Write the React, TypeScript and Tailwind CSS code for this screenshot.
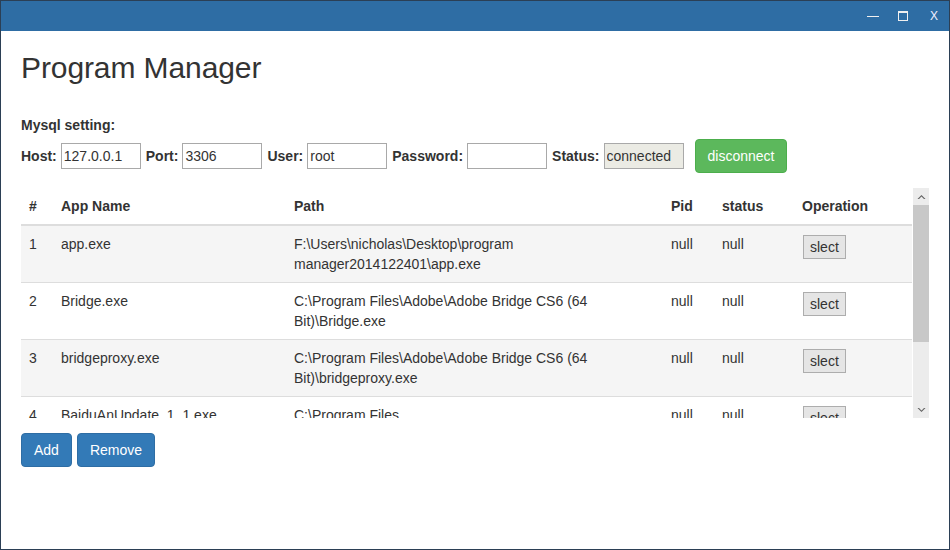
const rows = [
  { id: 1, name: "app.exe", path: "F:\\Users\\nicholas\\Desktop\\program manager2014122401\\app.exe" },
  { id: 2, name: "Bridge.exe", path: "C:\\Program Files\\Adobe\\Adobe Bridge CS6 (64 Bit)\\Bridge.exe" },
  { id: 3, name: "bridgeproxy.exe", path: "C:\\Program Files\\Adobe\\Adobe Bridge CS6 (64 Bit)\\bridgeproxy.exe" },
  { id: 4, name: "BaiduAnUpdate_1_1.exe", path: "C:\\Program Files (x86)\\Baidu\\BaiduAn\\BaiduAnUpdate_1_1.exe" },
  { id: 5, name: "notepad.exe", path: "C:\\Windows\\System32\\notepad.exe" },
];

const font = { fontFamily: "'Liberation Sans', Arial, sans-serif" };

function Field({ label, value, first, disabled }: { label: string; value: string; first?: boolean; disabled?: boolean }) {
  return (
    <>
      <span className={`font-bold mr-1 ${first ? "" : "ml-[5px]"}`}>{label}</span>
      <input
        readOnly
        value={value}
        className={`w-[80px] h-[26px] border border-[#a9a9a9] px-[2px] text-[14px] text-[#333] outline-none ${
          disabled ? "bg-[#ebebe4]" : "bg-white"
        }`}
        style={font}
      />
    </>
  );
}

export default function App() {
  return (
    <div className="w-[950px] h-[550px] border border-[#2b3f55] bg-white text-[#333] text-[14px] leading-[20px] flex flex-col" style={font}>
      <div className="h-[30px] bg-[#2e6da4] flex items-center justify-end shrink-0">
        <svg width="13" height="2" className="mr-[18px] mt-[1px]">
          <rect x="0" y="0" width="12" height="1" fill="#f0f0f0" />
        </svg>
        <svg width="10" height="10" className="mr-[22px]">
          <rect x="0.5" y="0.5" width="9" height="9" fill="none" stroke="#f0f0f0" />
          <rect x="0" y="0" width="10" height="2" fill="#f0f0f0" />
        </svg>
        <span className="text-[12px] leading-none text-[#eef] mr-[11px]">X</span>
      </div>

      <div className="px-[20px] pt-[20px] flex flex-col">
        <h1 className="text-[30px] leading-[33px] font-normal tracking-[-0.1px]">Program Manager</h1>

        <div className="font-bold mt-[31px]">Mysql setting:</div>

        <div className="flex items-center h-[34px] mt-[4px]">
          <Field label="Host:" value="127.0.0.1" first />
          <Field label="Port:" value="3306" />
          <Field label="User:" value="root" />
          <Field label="Password:" value="" />
          <Field label="Status:" value="connected" disabled />
          <button className="ml-[11px] h-[34px] px-[12px] bg-[#5cb85c] border border-[#4cae4c] rounded-[4px] text-white text-[14px]" style={font}>
            disconnect
          </button>
        </div>

        <div className="mt-[15px] flex h-[230px]">
          <div className="flex-1 overflow-hidden">
            <table className="w-[891px] table-fixed border-collapse">
              <colgroup>
                <col className="w-[32px]" />
                <col className="w-[233px]" />
                <col className="w-[377px]" />
                <col className="w-[51px]" />
                <col className="w-[80px]" />
                <col className="w-[118px]" />
              </colgroup>
              <thead>
                <tr>
                  {["#", "App Name", "Path", "Pid", "status", "Operation"].map((h) => (
                    <th key={h} className="text-left font-bold p-[8px] border-b-2 border-[#ddd]">
                      {h}
                    </th>
                  ))}
                </tr>
              </thead>
              <tbody>
                {rows.map((r, i) => (
                  <tr key={r.id} className={i % 2 === 0 ? "bg-[#f5f5f5]" : "bg-white"}>
                    <td className="p-[8px] align-top border-t border-[#ddd]">{r.id}</td>
                    <td className="p-[8px] align-top border-t border-[#ddd]">{r.name}</td>
                    <td className="p-[8px] align-top border-t border-[#ddd]">{r.path}</td>
                    <td className="p-[8px] align-top border-t border-[#ddd]">null</td>
                    <td className="p-[8px] align-top border-t border-[#ddd]">null</td>
                    <td className="p-[8px] align-top border-t border-[#ddd]">
                      <button className="ml-[1px] mt-[1px] h-[24px] px-[6px] border border-[#adadad] bg-[#e5e5e5] text-[14px] text-[#333] leading-[20px]" style={font}>
                        slect
                      </button>
                    </td>
                  </tr>
                ))}
              </tbody>
            </table>
          </div>
          <div className="w-[16px] ml-[1px] bg-[#ececec] flex flex-col shrink-0">
            <div className="h-[17px] flex items-center justify-center">
              <svg width="9" height="6" viewBox="0 0 9 6">
                <path d="M0.5 5 L4.5 1 L8.5 5 L7 5 L4.5 2.6 L2 5 Z" fill="#606060" />
              </svg>
            </div>
            <div className="h-[137px] bg-[#c8c8c8]" />
            <div className="flex-1" />
            <div className="h-[17px] flex items-center justify-center">
              <svg width="9" height="6" viewBox="0 0 9 6">
                <path d="M0.5 1 L4.5 5 L8.5 1 L7 1 L4.5 3.4 L2 1 Z" fill="#606060" />
              </svg>
            </div>
          </div>
        </div>

        <div className="flex gap-[5px] mt-[15px]">
          <button className="h-[34px] px-[12px] bg-[#337ab7] border border-[#2e6da4] rounded-[4px] text-white text-[14px]" style={font}>
            Add
          </button>
          <button className="h-[34px] px-[12px] bg-[#337ab7] border border-[#2e6da4] rounded-[4px] text-white text-[14px]" style={font}>
            Remove
          </button>
        </div>
      </div>
    </div>
  );
}
